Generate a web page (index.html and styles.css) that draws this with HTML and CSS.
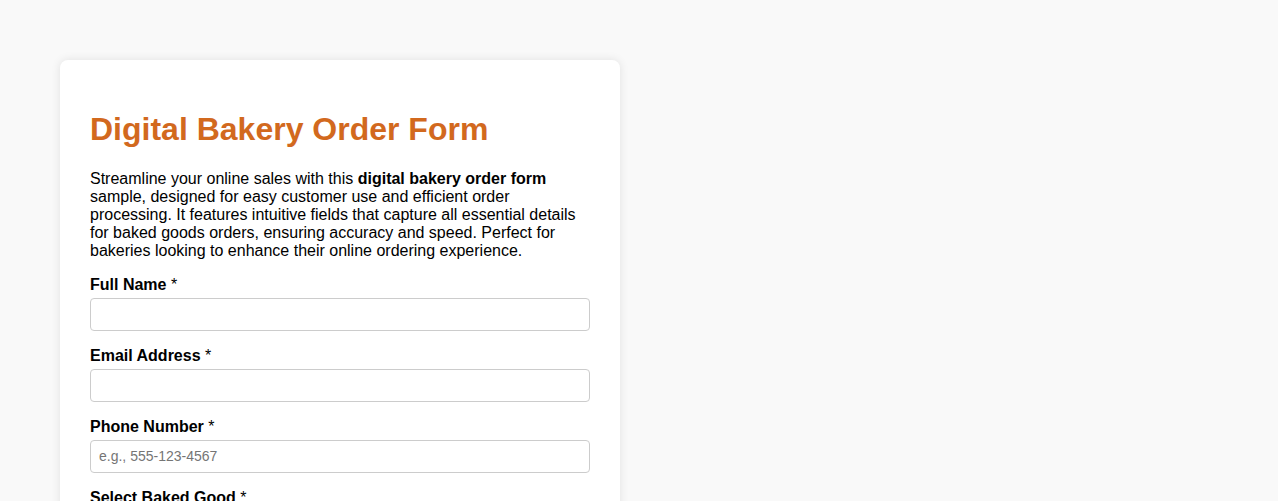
FILE: index.html
```html
<!DOCTYPE html>
<html lang="en">
<head>
<meta charset="utf-8">
<title>Digital Bakery Order Form</title>
<link rel="stylesheet" href="styles.css">
</head>
<body>
<div class="card">
  <h1 class="title">Digital Bakery Order Form</h1>
  <p class="intro">Streamline your online sales with this <strong>digital bakery order form</strong> sample, designed for easy customer use and efficient order processing. It features intuitive fields that capture all essential details for baked goods orders, ensuring accuracy and speed. Perfect for bakeries looking to enhance their online ordering experience.</p>
  <form class="form">
    <div class="group">
      <label class="label" for="name">Full Name <span class="req">*</span></label>
      <input class="field" id="name" type="text">
    </div>
    <div class="group">
      <label class="label" for="email">Email Address <span class="req">*</span></label>
      <input class="field" id="email" type="email">
    </div>
    <div class="group">
      <label class="label" for="phone">Phone Number <span class="req">*</span></label>
      <input class="field" id="phone" type="tel" placeholder="e.g., 555-123-4567">
    </div>
    <div class="group">
      <label class="label" for="good">Select Baked Good <span class="req">*</span></label>
      <select class="field" id="good">
        <option>-- Please choose an option --</option>
      </select>
    </div>
    <div class="group">
      <label class="label" for="qty">Quantity <span class="req">*</span></label>
      <input class="field" id="qty" type="number">
    </div>
  </form>
</div>
</body>
</html>
```
FILE: styles.css
```css
html, body {
  margin: 0;
  padding: 0;
}
body {
  background: #f9f9f9;
  font-family: "Liberation Sans", Arial, sans-serif;
  color: #000;
  padding: 60px;
}
.card {
  width: 500px;
  background: #fff;
  padding: 30px;
  border-radius: 8px;
  box-shadow: 0 0 10px rgba(0, 0, 0, 0.1);
}
.title {
  color: #d2691e;
  font-size: 32px;
  font-weight: bold;
  margin: 21px 0 21px;
}
.intro {
  font-size: 16px;
  margin: 22px 0 16px;
}
.group {
  margin-bottom: 16px;
}
.label {
  display: block;
  font-weight: bold;
  font-size: 16px;
  margin-bottom: 4px;
}
.req {
  font-weight: normal;
}
.field {
  display: block;
  width: 100%;
  box-sizing: border-box;
  padding: 8px;
  line-height: 15px;
  font-size: 14px;
  font-family: "Liberation Sans", Arial, sans-serif;
  border: 1px solid #ccc;
  border-radius: 4px;
  background: #fff;
  margin: 0;
}
.field::placeholder {
  color: #757575;
}
```
